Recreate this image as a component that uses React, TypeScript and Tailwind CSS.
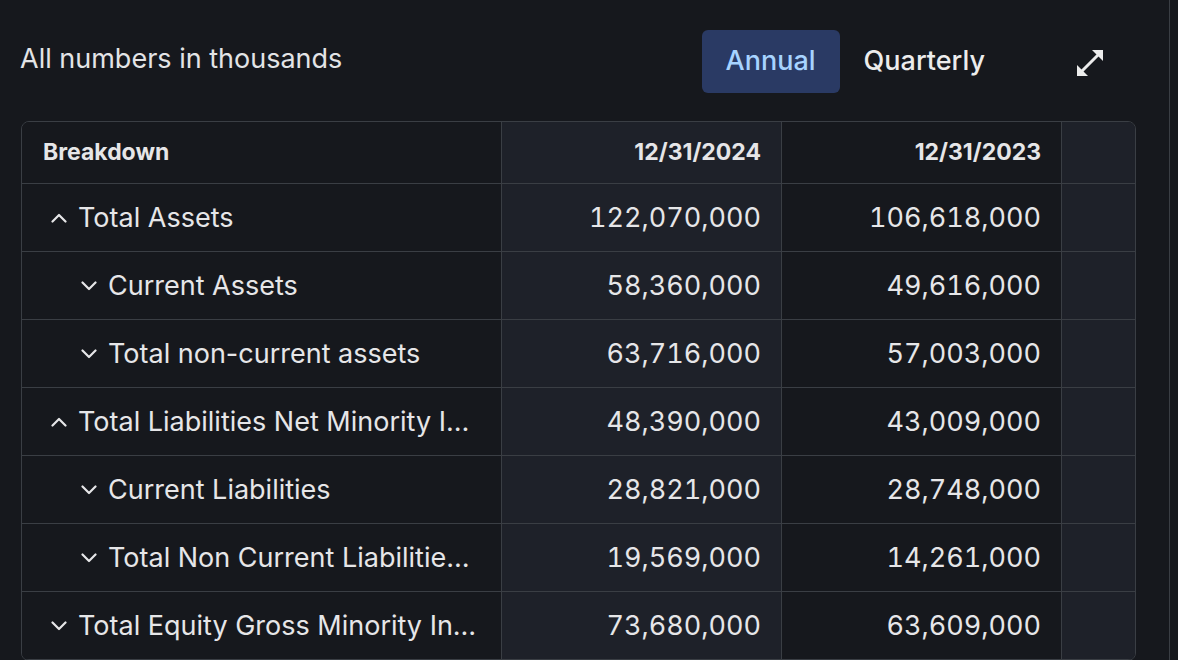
const rows = [
  { label: "Total Assets", level: 0, open: true, a: "122,070,000", b: "106,618,000" },
  { label: "Current Assets", level: 1, open: false, a: "58,360,000", b: "49,616,000" },
  { label: "Total non-current assets", level: 1, open: false, a: "63,716,000", b: "57,003,000" },
  { label: "Total Liabilities Net Minority Interest", level: 0, open: true, a: "48,390,000", b: "43,009,000" },
  { label: "Current Liabilities", level: 1, open: false, a: "28,821,000", b: "28,748,000" },
  { label: "Total Non Current Liabilities Net Minority Interest", level: 1, open: false, a: "19,569,000", b: "14,261,000" },
  { label: "Total Equity Gross Minority Interest", level: 0, open: false, a: "73,680,000", b: "63,609,000" },
]

function ExpandIcon() {
  return (
    <svg width="26" height="26" viewBox="0 0 26 26" fill="#ececec">
      <polygon points="26,0 26,11 15,0" />
      <polygon points="0,26 0,15 11,26" />
      <line x1="5" y1="21" x2="21" y2="5" stroke="#ececec" strokeWidth="3" />
    </svg>
  )
}

function Chevron({ up }: { up: boolean }) {
  return (
    <svg width="16" height="10" viewBox="0 0 16 10" fill="none" className="shrink-0 mr-[11px]">
      <polyline
        points={up ? "1.5,8.5 8,2 14.5,8.5" : "1.5,1.5 8,8 14.5,1.5"}
        stroke="#e6e6e8"
        strokeWidth="2.2"
        strokeLinecap="round"
        strokeLinejoin="round"
      />
    </svg>
  )
}

export default function App() {
  return (
    <div className="min-h-[660px] bg-[#16181d] font-['Inter',sans-serif] text-[#e6e6e8]">
      <div className="w-[1170px] min-h-[660px] border-r border-[#3a3e44] pl-[20px] pt-[30px]">
        <div className="flex items-start w-[1115px]">
          <div className="text-[27px] leading-none mt-[15px] text-[#e3e4e6]">All numbers in thousands</div>
          <div className="ml-auto flex items-center">
            <button className="h-[63px] px-[24px] rounded-[6px] bg-[#2a3a64] text-[#a7d3ff] text-[27px] font-medium">
              Annual
            </button>
            <button className="h-[63px] px-[24px] text-[#ececec] text-[27px] font-medium">Quarterly</button>
            <button className="ml-[68px] mr-[32px] mt-[2px] flex items-center">
              <ExpandIcon />
            </button>
          </div>
        </div>

        <div className="ml-px mt-[28px] w-[1115px] border border-[#3a3e44] rounded-[8px] overflow-hidden">
          <div className="grid grid-cols-[480px_280px_280px_73px] h-[62px] border-b border-[#3a3e44] text-[23px] font-bold">
            <div className="flex items-center pl-[21px] border-r border-[#3a3e44] bg-[#16181d]">Breakdown</div>
            <div className="flex items-center justify-end pr-[20px] border-r border-[#3a3e44] bg-[#1e2129]">12/31/2024</div>
            <div className="flex items-center justify-end pr-[20px] border-r border-[#3a3e44] bg-[#16181d]">12/31/2023</div>
            <div className="bg-[#1e2129]" />
          </div>
          {rows.map((r, i) => (
            <div
              key={i}
              className="grid grid-cols-[480px_280px_280px_73px] h-[68px] border-b border-[#3a3e44] text-[27px]"
            >
              <div
                className={
                  "flex items-center min-w-0 pt-px pr-[24px] border-r border-[#3a3e44] bg-[#16181d] " +
                  (r.level === 0 ? "pl-[29px]" : "pl-[59px]")
                }
              >
                <Chevron up={r.open} />
                <span className="truncate">{r.label}</span>
              </div>
              <div className="flex items-center justify-end pt-px pr-[20px] border-r border-[#3a3e44] bg-[#1e2129] tabular-nums">{r.a}</div>
              <div className="flex items-center justify-end pt-px pr-[20px] border-r border-[#3a3e44] bg-[#16181d] tabular-nums">{r.b}</div>
              <div className="bg-[#1e2129]" />
            </div>
          ))}
        </div>
      </div>
    </div>
  )
}
